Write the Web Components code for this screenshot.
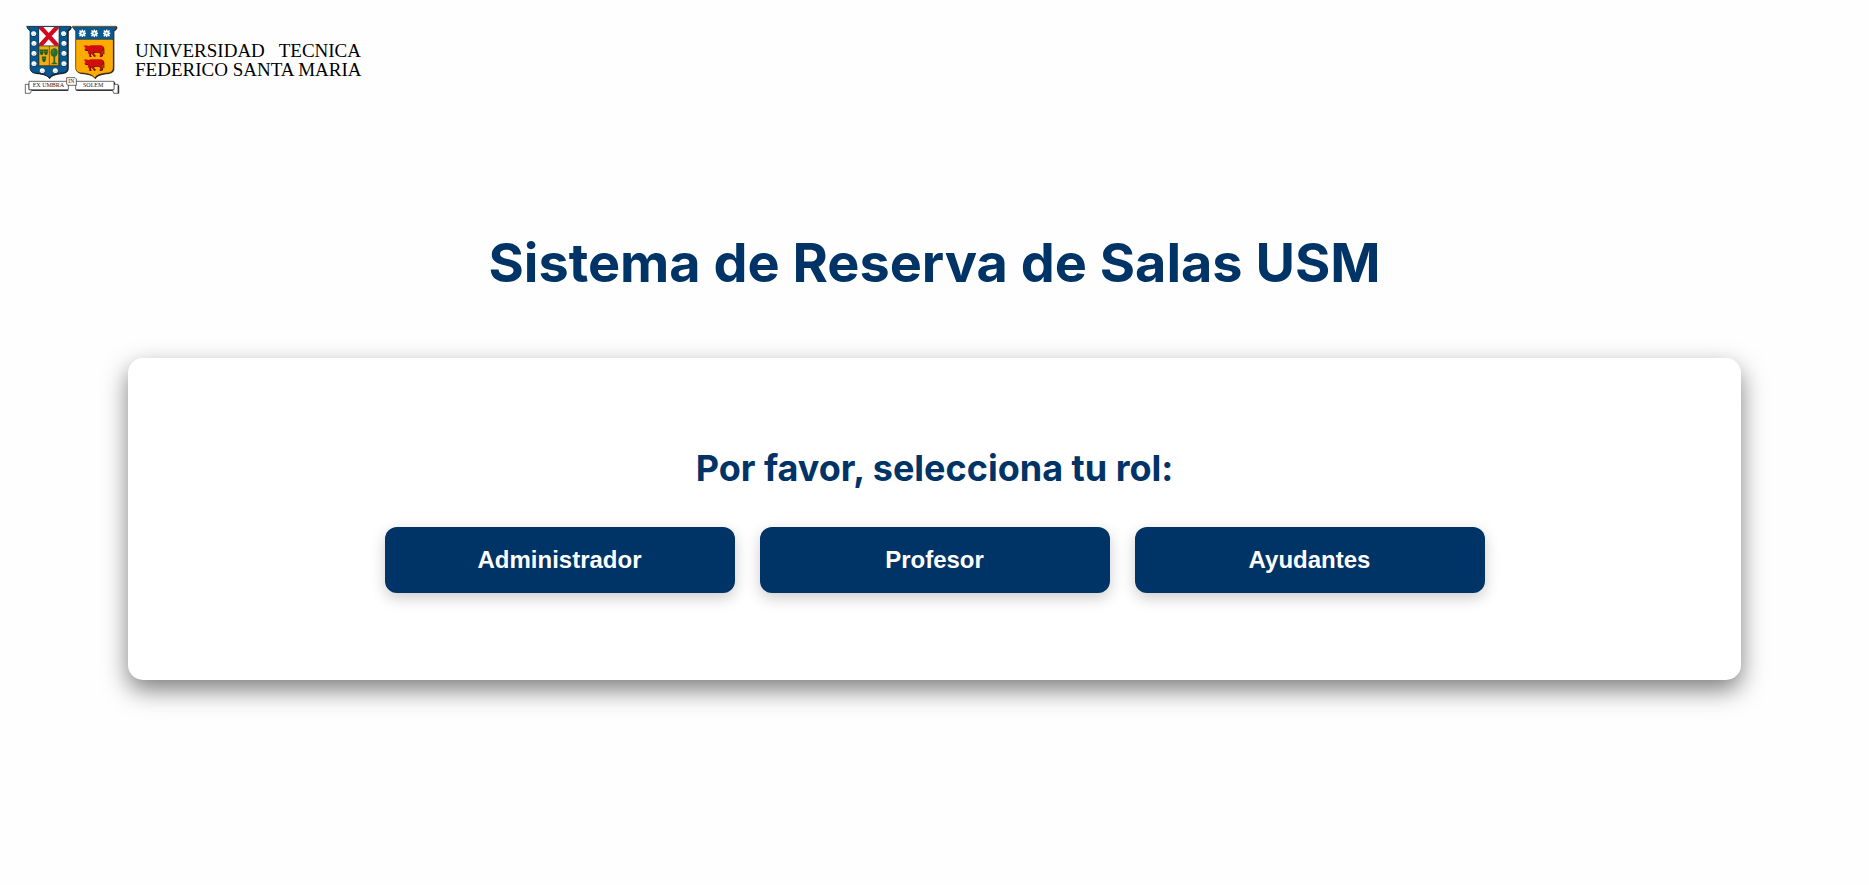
<!DOCTYPE html>
<html lang="es">
<head>
<meta charset="utf-8">
<meta name="viewport" content="width=device-width, initial-scale=1">
<title>Sistema de Reserva de Salas USM</title>
<style>
  body { margin: 0; background: #fefefe; color: #003366; font-family: Inter, "Liberation Sans", sans-serif; }
</style>
</head>
<body>
<reserva-app></reserva-app>

<template id="tpl-crest">
  <style>
    :host { display: block; flex: none; }
    svg { display: block; width: 120px; height: 90px; }
  </style>
  <svg viewBox="0 0 360 270" role="img" aria-label="Escudo USM">
    <defs>
      <path id="shield" d="M-67 34 H65 C65 40 62 44 56 46 V158 C56 169 49 173 38 174 C17 176 6 180 0 189 C-6 180 -17 176 -38 174 C-50 173 -57 169 -57 158 V46 C-62 44 -65 40 -67 34 Z"/>
      <g id="pearl">
        <circle r="8" cx="1" cy="1" fill="#08314f"/>
        <path d="M-3 -7 L3 -7 L8 -2 L7 4 L3 7 L-4 7 L-8 2 L-7 -4 Z" fill="#f8fafc"/>
        <path d="M-3 3 Q2 6 5 0" fill="none" stroke="#a9bccb" stroke-width="2"/>
      </g>
      <g id="star">
        <g stroke="#fff" stroke-width="5" stroke-linecap="round">
          <path d="M0 -9 V9 M-9 0 H9 M-7 -7 L7 7 M-7 7 L7 -7"/>
        </g>
        <circle r="3" fill="#4e86ac"/>
      </g>
      <path id="ox-shape" d="M0 3 L5 1 L16 3 L22 1 H48 C57 0 60 4 60 11 V26 L57 26 V12 L54 17 L56 31 L51 34 H46 L50 29 L45 21 L31 21 L29 25 L35 31 L30 34 L25 27 L22 22 L20 28 L22 34 H15 L17 30 L12 21 L13 15 L4 16 L2 13 L7 8 Z"/>
      <g id="ox">
        <use href="#ox-shape" x="2" y="2" fill="#3f0903"/>
        <use href="#ox-shape" fill="#d20d0d"/>
      </g>
      <g id="cup">
        <path d="M-6 0 H6 L5 9 L3 15 H-3 L-5 9 Z" fill="#12602a" stroke="#3a4a10" stroke-width="1"/>
        <path d="M-5 5 H5" stroke="#5f8c25" stroke-width="2"/>
      </g>
    </defs>

    <!-- Left shield -->
    <use href="#shield" x="104" y="2" fill="#111" stroke="#111" stroke-width="2"/>
    <use href="#shield" x="102" y="0" fill="#08588f" stroke="#12212c" stroke-width="2"/>
    <path d="M72 36 H132 V92 H72 Z" fill="#fff"/>
    <path d="M72 36 H85 L101 54 L118 36 H131 V41 L110 63 L131 86 V92 H119 L101 73 L84 92 H72 V86 L93 63 L72 41 Z" fill="#d5081e"/>
    <path d="M71 36 V152 H132 V36" fill="none" stroke="#102f3d" stroke-width="2"/>
    <path d="M72 93 H131 V152 H72 Z" fill="#f4ac12" stroke="#3c390d" stroke-width="2"/>
    <path d="M103 93 V152" stroke="#3c390d" stroke-width="2"/>
    <use href="#cup" x="80" y="104"/>
    <use href="#cup" x="93" y="104"/>
    <use href="#cup" x="87" y="125"/>
    <path d="M118 100 L125 103 L128 110 L126 120 L120 125 V142 L127 147 H109 L116 142 V125 L110 122 L107 114 L109 104 Z" fill="#23702b" stroke="#2a4915" stroke-width="1"/>
    <path d="M112 107 L118 104 M111 114 L117 110" stroke="#739537" stroke-width="2"/>
    <use href="#pearl" x="56" y="56"/><use href="#pearl" x="57" y="85"/>
    <use href="#pearl" x="57" y="115"/><use href="#pearl" x="57" y="146"/>
    <use href="#pearl" x="146" y="56"/><use href="#pearl" x="147" y="85"/>
    <use href="#pearl" x="147" y="115"/><use href="#pearl" x="147" y="146"/>
    <use href="#pearl" x="82" y="167"/><use href="#pearl" x="121" y="167"/>

    <!-- Right shield -->
    <use href="#shield" x="241" y="2" fill="#111" stroke="#111" stroke-width="2"/>
    <use href="#shield" x="239" y="0" fill="#fcac00" stroke="#33260c" stroke-width="2"/>
    <path d="M173 35 H303 C303 40 300 44 295 46 V73 H183 V46 C178 44 175 40 173 35 Z" fill="#08588f"/>
    <path d="M183 73 H295" stroke="#183647" stroke-width="2"/>
    <use href="#star" x="202" y="55"/><use href="#star" x="238" y="55"/><use href="#star" x="275" y="55"/>
    <use href="#ox" x="206" y="90"/><use href="#ox" x="206" y="132"/>

    <!-- Motto ribbon -->
    <path d="M50 226 H160 M184 226 H293 M299 202 V224 M311 211 V236" fill="none" stroke="#111" stroke-width="3"/>
    <g fill="#fff" stroke="#222" stroke-width="2">
      <path d="M42 208 H31 V235 H46 L50 224 H42 Z"/>
      <path d="M296 208 H309 V235 H296 L292 224 H296 Z"/>
      <path d="M42 199 H160 V224 H42 Z"/>
      <path d="M182 199 H297 V224 H182 Z"/>
      <path d="M155 188 H180 L184 192 V211 H158 L155 206 Z"/>
    </g>
    <g fill="#222" font-family="Liberation Serif, serif">
      <text x="53" y="217" font-size="18">EX UMBRA</text>
      <text x="204" y="217" font-size="18">SOLEM</text>
      <text x="160" y="205" font-size="17">IN</text>
    </g>
  </svg>
</template>

<template id="tpl-header">
  <style>
    :host { display: block; }
    header { display: flex; align-items: center; padding: 15px 15px 0; }
    .name { width: 226px; font: 19px/19px "Liberation Serif", serif; color: #000; }
    .name span { display: block; white-space: nowrap; text-align-last: justify; }
  </style>
  <header>
    <usm-crest></usm-crest>
    <div class="name"><span>UNIVERSIDAD TECNICA</span><span>FEDERICO SANTA MARIA</span></div>
  </header>
</template>

<template id="tpl-button">
  <style>
    :host { display: block; flex: 0 1 350px; }
    button {
      width: 100%; padding: 19px 16px; border: 0; border-radius: 12px;
      background: #003366; color: #fff; cursor: pointer;
      font: bold 24px/28px "Liberation Sans", Arial, sans-serif;
      box-shadow: 0 5px 15px rgba(0, 0, 0, .2);
    }
    button:hover { background: #00264d; }
  </style>
  <button type="button"><slot></slot></button>
</template>

<template id="tpl-card">
  <style>
    :host { display: block; }
    section {
      padding: 88px 64px 87px; border-radius: 15px; background: #fff; text-align: center;
      box-shadow: 0 10px 25px rgba(0, 0, 0, .5);
    }
    h2 { margin: 0 0 37px; font-size: 36px; line-height: 44px; font-weight: 700; }
    .roles { display: flex; justify-content: center; gap: 25px; }
  </style>
  <section aria-labelledby="heading">
    <h2 id="heading"><slot name="heading"></slot></h2>
    <div class="roles"><slot></slot></div>
  </section>
</template>

<template id="tpl-app">
  <style>
    :host { display: block; }
    main { padding: 124px 128px 64px; }
    h1 { margin: 0 0 61px; font-size: 54px; line-height: 68px; font-weight: 700; text-align: center; }
  </style>
  <usm-header></usm-header>
  <main>
    <h1>Sistema de Reserva de Salas USM</h1>
    <role-card>
      <span slot="heading">Por favor, selecciona tu rol:</span>
      <role-button>Administrador</role-button>
      <role-button>Profesor</role-button>
      <role-button>Ayudantes</role-button>
    </role-card>
  </main>
</template>

<script>
  class TemplateElement extends HTMLElement {
    constructor() {
      super();
      const tpl = document.getElementById(this.constructor.template);
      this.attachShadow({ mode: "open" }).append(tpl.content.cloneNode(true));
    }
  }
  customElements.define("usm-crest", class extends TemplateElement { static template = "tpl-crest"; });
  customElements.define("usm-header", class extends TemplateElement { static template = "tpl-header"; });
  customElements.define("role-button", class extends TemplateElement { static template = "tpl-button"; });
  customElements.define("role-card", class extends TemplateElement { static template = "tpl-card"; });
  customElements.define("reserva-app", class extends TemplateElement { static template = "tpl-app"; });
</script>
</body>
</html>
